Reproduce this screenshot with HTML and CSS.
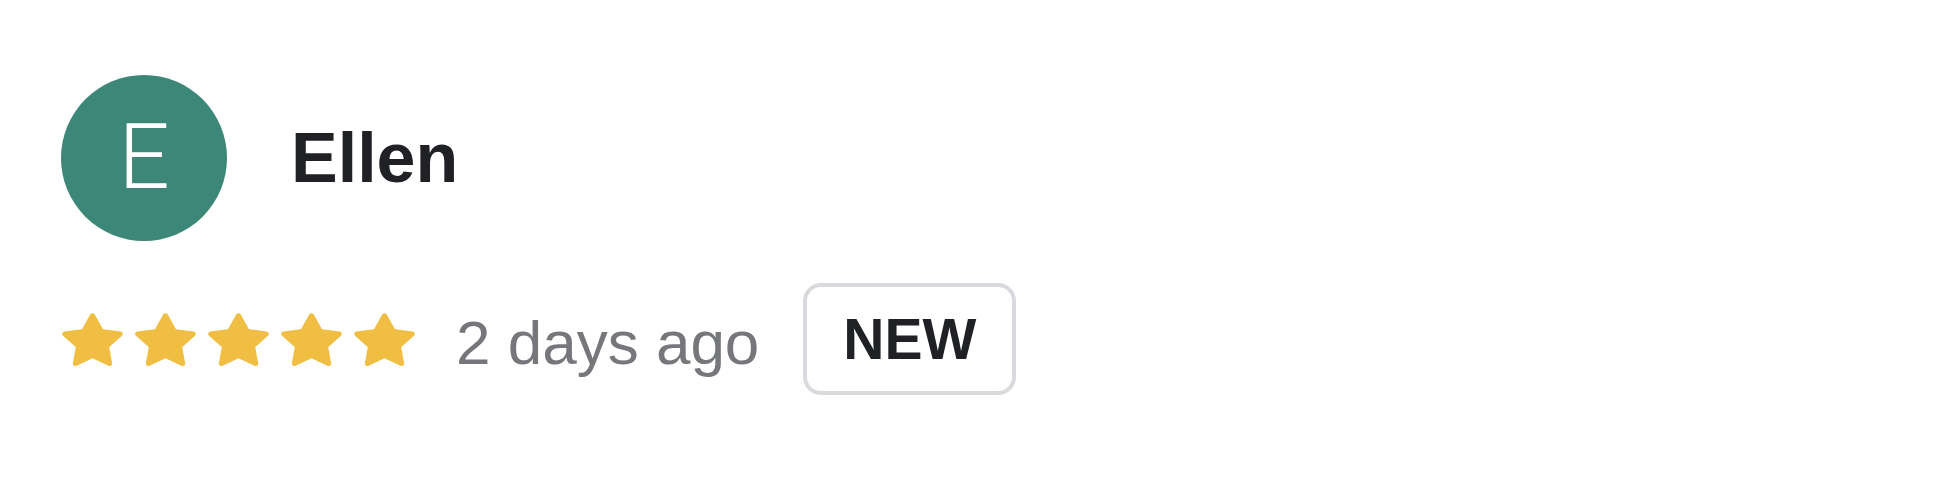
FILE: index.html
```html
<!DOCTYPE html>
<html lang="en">
<head>
    <meta charset="UTF-8">
    <meta name="viewport" content="width=device-width, initial-scale=1.0">
    <title>Review</title>
    <link rel="stylesheet" href="styles.css">
</head>
<body>
    <!-- Review card -->
    <section class="review">
        <div class="review-head">
            <div class="avatar">E</div>
            <h2 class="reviewer-name">Ellen</h2>
        </div>

        <div class="review-meta">
            <div class="stars">
                <svg class="star" viewBox="-1.05 -1.1 2.1 2.0" preserveAspectRatio="none"><path d="M0 -1 L0.3 -0.41 L0.951 -0.309 L0.48 0.156 L0.588 0.809 L0 0.51 L-0.588 0.809 L-0.48 0.156 L-0.951 -0.309 L-0.3 -0.41 Z"/></svg>
                <svg class="star" viewBox="-1.05 -1.1 2.1 2.0" preserveAspectRatio="none"><path d="M0 -1 L0.3 -0.41 L0.951 -0.309 L0.48 0.156 L0.588 0.809 L0 0.51 L-0.588 0.809 L-0.48 0.156 L-0.951 -0.309 L-0.3 -0.41 Z"/></svg>
                <svg class="star" viewBox="-1.05 -1.1 2.1 2.0" preserveAspectRatio="none"><path d="M0 -1 L0.3 -0.41 L0.951 -0.309 L0.48 0.156 L0.588 0.809 L0 0.51 L-0.588 0.809 L-0.48 0.156 L-0.951 -0.309 L-0.3 -0.41 Z"/></svg>
                <svg class="star" viewBox="-1.05 -1.1 2.1 2.0" preserveAspectRatio="none"><path d="M0 -1 L0.3 -0.41 L0.951 -0.309 L0.48 0.156 L0.588 0.809 L0 0.51 L-0.588 0.809 L-0.48 0.156 L-0.951 -0.309 L-0.3 -0.41 Z"/></svg>
                <svg class="star" viewBox="-1.05 -1.1 2.1 2.0" preserveAspectRatio="none"><path d="M0 -1 L0.3 -0.41 L0.951 -0.309 L0.48 0.156 L0.588 0.809 L0 0.51 L-0.588 0.809 L-0.48 0.156 L-0.951 -0.309 L-0.3 -0.41 Z"/></svg>
            </div>
            <span class="review-date">2 days ago</span>
            <span class="badge-new">NEW</span>
        </div>
    </section>
</body>
</html>
```

FILE: styles.css
```css
body {
    font-family: "Liberation Sans", Arial, sans-serif;
    background-color: #fff;
    color: #202124;
    margin: 0;
    padding: 0;
}

.review {
    padding: 75px 0 0 61px;
}

.review-head {
    display: flex;
    align-items: center;
    gap: 64px;
}

.avatar {
    width: 166px;
    height: 166px;
    border-radius: 50%;
    background-color: #3c8777;
    color: #fff;
    display: flex;
    align-items: center;
    justify-content: center;
    font-family: Roboto, "Liberation Sans", sans-serif;
    font-weight: 300;
    font-size: 90px;
    line-height: 1;
}

.reviewer-name {
    margin: 0;
    font-size: 70px;
    font-weight: 700;
    line-height: 1;
}

.review-meta {
    display: flex;
    align-items: center;
    margin-top: 42px;
}

.stars {
    display: flex;
    gap: 12px;
    margin-left: 1px;
    margin-right: 41px;
}

.star {
    width: 61px;
    height: 53px;
    fill: #f0be42;
    stroke: #f0be42;
    stroke-width: 0.18;
    stroke-linejoin: round;
}

.review-date {
    font-size: 62px;
    color: #76777b;
    margin-right: 44px;
    padding-top: 6px;
}

.badge-new {
    box-sizing: border-box;
    height: 112px;
    width: 213px;
    display: flex;
    align-items: center;
    justify-content: center;
    border: 4px solid #d9dadd;
    border-radius: 18px;
    font-size: 57px;
    font-weight: 700;
    color: #202124;
}
```
